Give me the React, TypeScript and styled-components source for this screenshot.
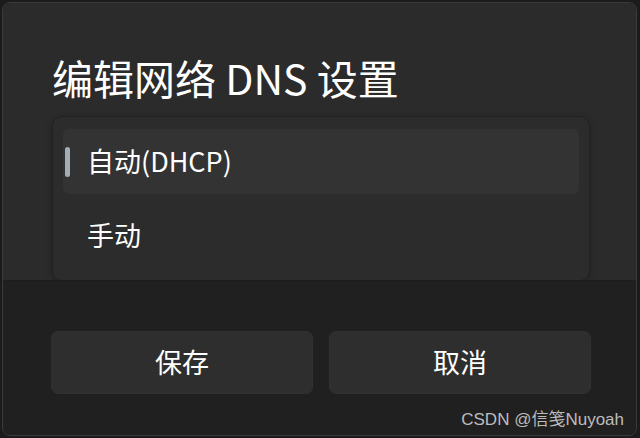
import React, { useState } from "react"
import styled, { createGlobalStyle } from "styled-components"

const GlobalStyle = createGlobalStyle`
  html, body {
    margin: 0;
    padding: 0;
    background: #1b1b1b;
  }
  body {
    font-family: "Noto Sans CJK SC", "Noto Sans", sans-serif;
  }
`

const Screen = styled.div`
  width: 640px;
  height: 438px;
  padding: 2px 3px 2px 2px;
  box-sizing: border-box;
  background: #1b1b1b;
`

const Dialog = styled.div`
  height: 100%;
  display: flex;
  flex-direction: column;
  border: 1px solid #3b3b3b;
  border-radius: 8px;
  overflow: hidden;
  box-sizing: border-box;
`

const Body = styled.div`
  height: 277px;
  display: flex;
  flex-direction: column;
  padding: 54px 46px 0 49px;
  background: #2b2b2b;
  box-sizing: border-box;
`

const Title = styled.h1`
  margin: 0;
  font-size: 41px;
  line-height: 41px;
  font-weight: 400;
  color: #ffffff;
`

const ListBox = styled.div`
  margin-top: 18px;
  display: flex;
  flex-direction: column;
  gap: 9px;
  padding: 12px 10px;
  border: 1px solid #222222;
  border-radius: 10px;
  background: #2c2c2c;
  box-shadow: 0 2px 6px rgba(0, 0, 0, 0.25);
`

const Item = styled.div<{ $selected?: boolean }>`
  position: relative;
  height: 65px;
  display: flex;
  align-items: center;
  padding-left: 24px;
  border-radius: 6px;
  background: ${(p) => (p.$selected ? "#333333" : "transparent")};
  color: #ffffff;
  font-size: 27px;
  line-height: 1;
  padding-bottom: 3px;
  box-sizing: border-box;
  cursor: default;
`

const Indicator = styled.span`
  position: absolute;
  left: 2px;
  top: 18px;
  width: 5px;
  height: 30px;
  border-radius: 3px;
  background: #a3adb6;
`

const Footer = styled.div`
  flex: 1;
  display: flex;
  flex-direction: column;
  padding: 50px 44px 0 48px;
  background: #202020;
  border-top: 1px solid #1c1c1c;
`

const Buttons = styled.div`
  display: flex;
  gap: 16px;
`

const Button = styled.button`
  width: 262px;
  height: 63px;
  border: 1px solid #313131;
  border-radius: 7px;
  background: #2e2e2e;
  color: #ffffff;
  font-family: "Noto Sans CJK SC", sans-serif;
  font-size: 27px;
  padding: 0 0 3px;
`

const Watermark = styled.div`
  align-self: flex-end;
  margin-top: 16px;
  margin-right: -32px;
  font-family: "Liberation Sans", "Noto Sans CJK SC", sans-serif;
  font-size: 17px;
  color: #bcbcbc;
  line-height: 20px;
`

const options = ["自动(DHCP)", "手动"]

export default function App() {
  const [selected, setSelected] = useState(0)

  return (
    <>
      <GlobalStyle />
      <Screen>
        <Dialog>
          <Body>
            <Title>编辑网络 DNS 设置</Title>
            <ListBox>
              {options.map((label, i) => (
                <Item key={label} $selected={i === selected} onClick={() => setSelected(i)}>
                  {i === selected && <Indicator />}
                  {label}
                </Item>
              ))}
            </ListBox>
          </Body>
          <Footer>
            <Buttons>
              <Button>保存</Button>
              <Button>取消</Button>
            </Buttons>
            <Watermark>CSDN @信笺Nuyoah</Watermark>
          </Footer>
        </Dialog>
      </Screen>
    </>
  )
}
